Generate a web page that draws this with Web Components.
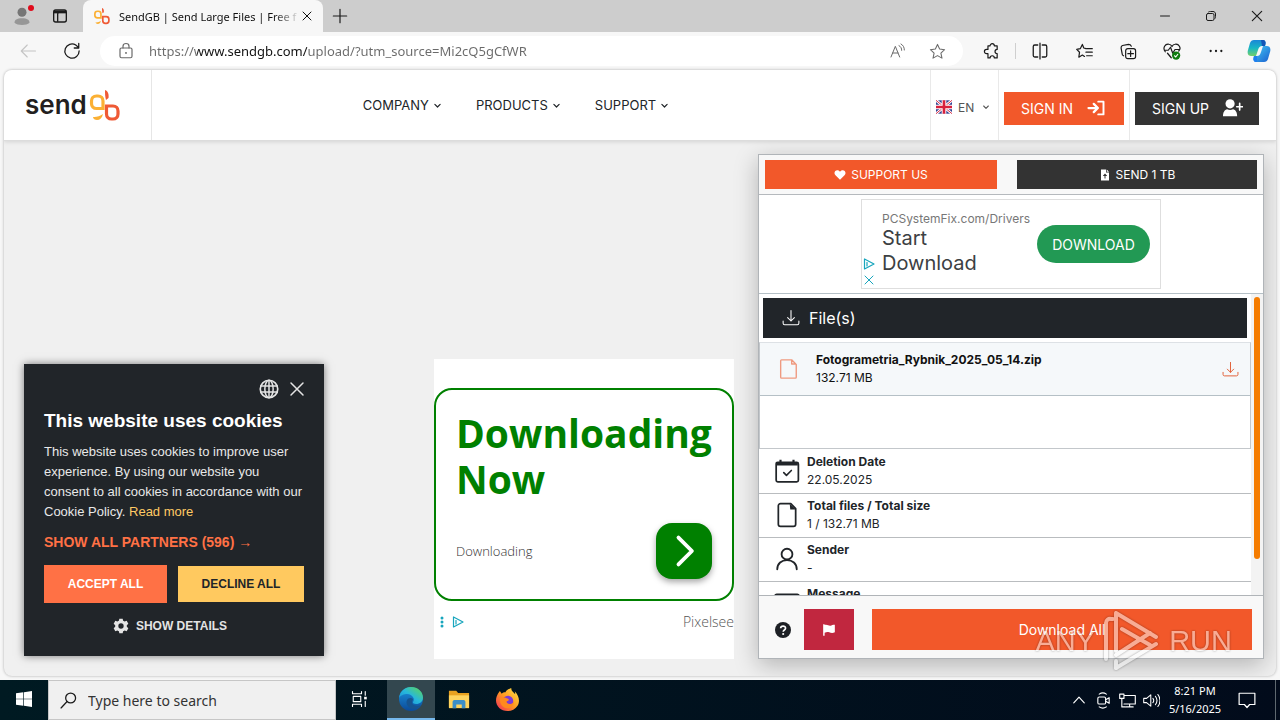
<!DOCTYPE html>
<html lang="en">
<head>
<meta charset="utf-8">
<title>SendGB | Send Large Files | Free file transfer</title>
<style>
  html, body { height: 100%; margin: 0; }
  body {
    font-family: Inter, "Liberation Sans", sans-serif;
    font-size: 12px;
    color: #212529;
    overflow: hidden;
  }
</style>
</head>
<body>
<desktop-screen>
  <browser-tabs slot="browser" text="SendGB | Send Large Files | Free f"></browser-tabs>
  <browser-toolbar slot="browser" url="https://www.sendgb.com/upload/?utm_source=Mi2cQ5gCfWR"></browser-toolbar>
  <site-header slot="page"></site-header>
  <site-main slot="page">
    <cookie-banner></cookie-banner>
    <square-ad></square-ad>
    <download-panel>
      <info-row icon="calendar" label="Deletion Date">22.05.2025</info-row>
      <info-row icon="file" label="Total files / Total size">1 / 132.71 MB</info-row>
      <info-row icon="person" label="Sender">-</info-row>
      <info-row icon="message" label="Message">-</info-row>
    </download-panel>
  </site-main>
  <windows-taskbar slot="taskbar"></windows-taskbar>
  <run-watermark slot="taskbar"></run-watermark>
</desktop-screen>

<script>
const line = (d, w = 1.5) => `<path d="${d}" fill="none" stroke="currentColor" stroke-width="${w}" stroke-linecap="round" stroke-linejoin="round"/>`;
const fill = (d) => `<path d="${d}" fill="currentColor"/>`;

// every icon is drawn on a 24 x 24 grid
const ICONS = {
  profile: '<circle cx="12" cy="7" r="6" fill="#767676"/><path d="M2 21c0-4 3-6 10-6s10 2 10 6c-2 2-6 3-10 3S4 23 2 21z" fill="#979797"/>',
  tabs: '<rect x="2.5" y="3" width="19" height="18" rx="3" fill="none" stroke="currentColor" stroke-width="2"/><path d="M3 4h18v4H3z" fill="currentColor"/>' + line('M8.5 8v12', 2),
  close: line('M4 4l16 16M20 4L4 20', 2),
  plus: line('M12 2v20M2 12h20', 1.8),
  minimize: line('M3 12h18', 2),
  restore: line('M6 7h9a3 3 0 0 1 3 3v8a3 3 0 0 1-3 3H6a3 3 0 0 1-3-3v-8a3 3 0 0 1 3-3zM7 4c1-1 2-1 4-1h5c3 0 5 2 5 5v5c0 2 0 3-1 4', 2),
  back: line('M22 12H3M11 4l-8 8 8 8', 1.5),
  refresh: line('M21.5 12A9.5 9.5 0 1 1 17 4l4 3.5M21 2v6h-6', 1.7),
  lock: '<rect x="4" y="8" width="16" height="13" rx="2" fill="none" stroke="currentColor" stroke-width="1.6"/>' + line('M8 8V5.5a4 3.5 0 0 1 8 0V8', 1.6) + '<circle cx="12" cy="14.5" r="1.3" fill="currentColor"/>',
  readAloud: line('M3 21L9.5 5 16 21M5.5 15h8M15 4c3 1.5 4 4 4 7M18 1.5c3.5 2 5 5 5 9', 1.5),
  star: line('M12 2l3 6.6 7 .8-5.2 4.8 1.5 7.2L12 17.8 5.7 21.4l1.5-7.2L2 9.4l7-.8z', 1.5),
  puzzle: line('M7 4h3a3 3 0 0 1 6 0h4v5a3 3 0 0 0 0 6v6h-4a3 3 0 0 0-6 0H7v-6H5a3 3 0 0 1 0-6h2z', 1.7),
  split: line('M9 4H5a2 2 0 0 0-2 2v12a2 2 0 0 0 2 2h4M15 4h4a2 2 0 0 1 2 2v12a2 2 0 0 1-2 2h-4M12 1.5v21', 1.7),
  favorites: line('M14 8l-3-1-2-5-3 6-5 1 4 4-1 7 5-3 3 2M15 8h8M14 13h9M15 18h8', 1.7),
  collections: '<rect x="8" y="8" width="14" height="14" rx="3" fill="none" stroke="currentColor" stroke-width="1.7"/>' + line('M15 11v8M11 15h8M5 18c-2-1-2-2-2-3L1.5 7c0-2 .5-3 2-3.5L12 2c2 0 3 .5 4 2.5', 1.7),
  health: line('M3 13C-1 8 3 2 8 3c2 0 3 1 4 3 1-2 2-3 4-3 5-1 9 5 5 9M2 11h5l3-4 3 8 3-5h6M6 15l5 6', 1.6) + '<circle cx="17.5" cy="18" r="5.5" fill="#107c10"/><path d="M15 18l2 2 3-4" stroke="#fff" stroke-width="1.5" fill="none"/>',
  dots: '<circle cx="4" cy="12" r="1.7" fill="currentColor"/><circle cx="12" cy="12" r="1.7" fill="currentColor"/><circle cx="20" cy="12" r="1.7" fill="currentColor"/>',
  copilot: `<defs><linearGradient id="a" x1="0" y1="0" x2="0" y2="1"><stop offset="0" stop-color="#1b86d8"/><stop offset=".5" stop-color="#18b6c4"/><stop offset="1" stop-color="#74d06a"/></linearGradient>
    <linearGradient id="b" x1="0" y1="0" x2="1" y2="1"><stop offset="0" stop-color="#45cdf5"/><stop offset="1" stop-color="#1a5fd0"/></linearGradient></defs>
    <path d="M7 1h9c2 0 3 2 2.500 4L18 7h-3c-2 0-3 1-4 4l-2 6H4c-3 0-4-3-3-6l2-7c.7-2 2-3 4-3z" fill="url(#a)"/>
    <path d="M17 23H9c-2 0-3-2-2.500-4L7 17h3c2 0 3-1 4-4l2-6h4c3 0 4 3 3 6l-2 7c-.7 2-2 3-4 3z" fill="url(#b)"/>
    <path d="M14 1h2c2 0 3 2 2.500 4L18 7h-3z" fill="#1456b8"/><path d="M10 23H9c-2 0-3-2-2.500-4L7 17h3z" fill="#1f7ff0"/>`,
  chevron: line('M5 9l7 7 7-7', 3.2),
  flag: '<rect width="24" height="20" y="2" fill="#2f3f8f"/><path d="M0 2l24 20M24 2L0 22" stroke="#fff" stroke-width="4"/><path d="M0 2l24 20M24 2L0 22" stroke="#d8304a" stroke-width="1.5"/><path d="M12 2v20M0 12h24" stroke="#fff" stroke-width="7"/><path d="M12 2v20M0 12h24" stroke="#d8203c" stroke-width="4"/>',
  signIn: line('M2 12h12M9 6.5l5.5 5.5L9 17.5', 3) + line('M15 3.5h7v17h-7', 2.6),
  signUp: '<circle cx="8.5" cy="7" r="5.5" fill="currentColor"/>' + fill('M0 22c0-5 2-8 5-8.5 2 1.2 5 1.2 7 0 3 .5 5 3.5 5 8.5z') + line('M20 6.5v8M16.5 10.5h7', 2),
  heart: fill('M12 21.5l-9.500-9.7C-1 7.500 2 2.500 6.500 2.500c2.500 0 4.500 1.300 5.500 3 1-1.700 3-3 5.500-3 4.500 0 7.500 5 4 9.300z'),
  fileUp: '<path d="M4 1h10v6h6v16H4zM15.5 1L20 5.5h-4.5zM12 9l-4.500 5H11v5h2v-5h3.500z" fill="currentColor" fill-rule="evenodd"/>',
  tray: line('M12 2v14M7.5 11.5L12 16l4.5-4.5M1.5 16v3a2 2 0 0 0 2 2h17a2 2 0 0 0 2-2v-3', 1.4),
  page: line('M16 2H5a1 1 0 0 0-1 1v18a1 1 0 0 0 1 1h15a1 1 0 0 0 1-1V7zM16 2v4.5h4.5', 1.5),
  calendar: '<rect x="2" y="4" width="20.5" height="18" rx="1.5" fill="none" stroke="currentColor" stroke-width="1.6"/>' + fill('M2 4h20v3H2zM5 1.5h2V5H5zM17 1.5h2V5h-2z') + line('M9 13.5l2.5 2.5 4.5-4.5', 1.5),
  file: line('M15.5 1.5H6a2 2 0 0 0-2 2v17a2 2 0 0 0 2 2h12a2 2 0 0 0 2-2V6z', 1.6) + fill('M14.5 1.5L20.5 7H15z'),
  person: '<circle cx="12" cy="7.5" r="5" fill="none" stroke="currentColor" stroke-width="1.7"/>' + line('M3 21.5c0-5.500 4-8.500 9-8.500s9 3 9 8.500', 1.7),
  message: '<rect x="1" y="4" width="22" height="17" rx="1.5" fill="none" stroke="currentColor" stroke-width="1.7"/>',
  help: '<circle cx="12" cy="12" r="12" fill="currentColor"/><path d="M8.5 9.5C8.5 5 16 5 15.800 9.500c0 2.500-3.500 2.500-3.500 5" stroke="#fff" stroke-width="2.5" fill="none"/><circle cx="12.3" cy="18" r="1.6" fill="#fff"/>',
  report: fill('M2 2h2.500v1.500c4-1.500 7 1.500 10 1 2-.3 4-1.500 7.500-1.500v13c-4 2-7 1-9.500 0-3-1-5-.5-8 .5V22H2z'),
  globe: '<circle cx="12" cy="12" r="10.5" fill="none" stroke="currentColor" stroke-width="2"/><ellipse cx="12" cy="12" rx="5" ry="10.5" fill="none" stroke="currentColor" stroke-width="1.8"/>' + line('M12 2v20M2 8.5h20M2 15.5h20', 1.8),
  gear: '<path fill-rule="evenodd" fill="currentColor" d="M9.5 1h5l.7 3 2.300 1.300 3-1 2.500 4.300-2.300 2.200v2.400l2.300 2.200-2.500 4.300-3-1-2.300 1.300-.7 3h-5l-.7-3-2.300-1.300-3 1L1 15.400l2.300-2.200v-2.400L1 8.600l2.500-4.300 3 1L8.800 4zM12 8a4 4 0 1 0 0 8 4 4 0 0 0 0-8z"/>',
  adChoices: line('M3 2v20l19-10z', 2.4) + line('M8 9v7', 2.4),
  moreVertical: '<circle cx="12" cy="4" r="3" fill="currentColor"/><circle cx="12" cy="12" r="3" fill="currentColor"/><circle cx="12" cy="20" r="3" fill="currentColor"/>',
  next: line('M8.500 3.500L17 12l-8.500 8.500', 2.4),
  windows: fill('M0 3.500L11 2v9.500H0zM12 1.800L24 0v11.500H12zM0 12.500h11V22L0 20.500zM12 12.500h12V24l-12-1.800z'),
  search: '<circle cx="15" cy="8.5" r="7" fill="none" stroke="currentColor" stroke-width="1.8"/>' + line('M10 13.500L1.500 22.500', 1.8),
  taskView: line('M2 2v3h12V2M2 22v-3h12v3M3 8.500h10v7H3zM19 2v5M19 15v7', 1.5) + fill('M17.500 9h3.500v3.500h-3.500z'),
  edge: `<defs><linearGradient id="a" x1="0" y1="1" x2="1" y2="0"><stop offset="0" stop-color="#1787d4"/><stop offset=".5" stop-color="#27b8dc"/><stop offset="1" stop-color="#62d84c"/></linearGradient>
    <linearGradient id="b" x1="0" y1="0" x2="0" y2="1"><stop offset="0" stop-color="#1c95df"/><stop offset="1" stop-color="#0c4a98"/></linearGradient></defs>
    <circle cx="12" cy="12" r="12" fill="url(#b)"/><path d="M0 11C1 4 6 0 12 0c7 0 12 5 12 10.500 0 4-3 6.500-7 6.500-2 0-3.500-1-3-2 1-1.500 1-3 .5-4C13 8 10 6.500 7 7c-3.500.5-6 2-7 4z" fill="url(#a)"/>
    <path d="M14 12c-2-2-5-1-6 1-2 4 2 9 7 9 3 0 5-1.500 7-4-3 2-8 1-9-2-.5-1.500 1-2.500 1-4z" fill="#16538f"/>`,
  explorer: '<path d="M1 3h8l2 2.500h12V21H1z" fill="#e9a220"/><path d="M1 8h22v14H1z" fill="#ffd45e"/><path d="M5 22v-7c0-1 1-2 2-2h10c1 0 2 1 2 2v7h-4v-4H9v4z" fill="#3c8fc8"/>',
  firefox: `<defs><linearGradient id="a" x1="1" y1="0" x2="0" y2="1"><stop offset="0" stop-color="#ffe64a"/><stop offset=".5" stop-color="#ff9a20"/><stop offset="1" stop-color="#f0255e"/></linearGradient></defs>
    <path d="M2 6l2-3 2 3c1-1 2-1.500 4-1.500C10 3 13 1 16 0c-.5 3 2 4 4 6.500 0-1 0-2-.5-3 5 5 5.500 11 3 15C20 22.500 16 24 12 24 5 24 0 19 0 13c0-3 1-5 2-7z" fill="url(#a)"/><circle cx="12.5" cy="13.5" r="5.5" fill="#7b3bd6"/><path d="M4 11c3-2 6-1 8 0 2 .5 2 2-1 3 0 3 5 4 8 0-1 5-4 7-7 7-5 0-8-4-8-10z" fill="#ff8a1e"/>`,
  up: line('M3 17l9-10 9 10', 2),
  meetNow: '<rect x="4" y="7" width="11" height="10" rx="2" fill="none" stroke="currentColor" stroke-width="1.6"/>' + line('M15 11l5-3v8l-5-3M6 3c3-2 7-2 10 0M6 21c3 2 7 2 10 0', 1.6),
  network: line('M7 5h16v12H7M15 17v4M10 21h10M1 3h6v6H1zM4 9v12h5', 1.6),
  volume: line('M1 9v6h4l6 5V4L5 9zM14 9c1.500 2 1.500 4 0 6M17.500 6c3 4 3 8 0 12M21 3.500c4 5 4 12 0 17', 1.5),
  notice: line('M1.500 3h21v15h-7L12 22l-3.500-4h-7z', 1.6)
};

class UiIcon extends HTMLElement {
    constructor() {
        super();
        let el = this;
        const size = el.getAttribute('size') || 16;
        el.attachShadow({ mode: 'open' }).innerHTML = `
      <style>
        :host { display: inline-flex; flex: none; }
        svg { display: block; }
      </style>
      <svg width="${size}" height="${size}" viewBox="0 0 24 24" aria-hidden="true">${ICONS[el.getAttribute('name')]}</svg>
    `;
    }
}

class GbMark extends HTMLElement {
    constructor() {
        super();
        let el = this;
        const size = el.getAttribute('size') || 34;
        el.attachShadow({ mode: 'open' }).innerHTML = `
      <style>
        :host { display: inline-flex; flex: none; }
      </style>
      <svg width="${size}" height="${size}" viewBox="0 0 34 34" aria-hidden="true">
        <path d="M15 20.500H8.500c-3 0-5-2-5-5V13c0-3 2-5 5-5h1.500c3 0 5 2 5 5z" fill="none" stroke="#fbb034" stroke-width="3.2"/>
        <path d="M5 29c3 .5 7-1 10-3-1 4-3 6-6 6-2 0-4-1-4-3z" fill="#fbb034"/>
        <path d="M18.500 18H25c3 0 5 2 5 5v3c0 3-2 5-5 5h-1.500c-3 0-5-2-5-5z" fill="none" stroke="#ef5a35" stroke-width="3.2"/>
        <path d="M17 2c3 1 4 4 3.500 8L18 12c-1-3-1-7-1-10z" fill="#ef5a35"/>
      </svg>
    `;
    }
}

// buttons share one reset inside each shadow root
const RESET = `
  * { box-sizing: border-box; }
  button, input, select { font: inherit; color: inherit; margin: 0; padding: 0; border: 0; border-radius: 0; background: none; outline: none; }
  button { display: inline-flex; align-items: center; justify-content: center; cursor: pointer; }
  a { text-decoration: none; color: inherit; }
`;

class DesktopScreen extends HTMLElement {
    constructor() {
        super();
        this.attachShadow({ mode: 'open' }).innerHTML = `
      <style>
        :host { display: flex; flex-direction: column; height: 100vh; background: #f7f7f7; position: relative; }
        .page {
          flex: 1; min-height: 0; display: flex; flex-direction: column;
          margin: 0 4px 4px; border-radius: 8px; overflow: hidden;
          background: #f0f0f0; box-shadow: 0 0 3px rgba(0, 0, 0, .3);
        }
      </style>
      <slot name="browser"></slot>
      <div class="page"><slot name="page"></slot></div>
      <slot name="taskbar"></slot>
    `;
    }
}

class BrowserTabs extends HTMLElement {
    constructor() {
        super();
        let el = this;
        el.attachShadow({ mode: 'open' }).innerHTML = `
      <style>
        ${RESET}
        :host { display: flex; height: 32px; background: #cdcdcd; color: #1b1b1b; font: 11px "Noto Sans", sans-serif; }
        .profile { width: 44px; position: relative; }
        .dot { position: absolute; top: 5px; right: 10px; width: 6px; height: 6px; border-radius: 50%; background: #e00b1c; }
        .workspaces { width: 32px; }
        .tab { display: flex; align-items: center; width: 240px; margin-left: 7px; padding: 0 10px; background: #f7f7f7; border-radius: 8px 8px 0 0; color: #111; }
        .title {
          flex: 1; margin-left: 8px; white-space: nowrap;
          -webkit-mask-image: linear-gradient(to right, #000 85%, transparent);
        }
        .close { width: 12px; height: 16px; }
        .new { width: 34px; }
        .window { margin-left: auto; display: flex; }
        .window button { width: 46px; }
      </style>
      <button class="profile" aria-label="Profile"><ui-icon name="profile" size="18"></ui-icon><span class="dot"></span></button>
      <button class="workspaces" aria-label="Tab actions"><ui-icon name="tabs" size="16"></ui-icon></button>
      <div class="tab">
        <gb-mark size="18"></gb-mark>
        <span class="title">${el.getAttribute('text')}</span>
        <button class="close" aria-label="Close tab"><ui-icon name="close" size="12"></ui-icon></button>
      </div>
      <button class="new" aria-label="New tab"><ui-icon name="plus" size="16"></ui-icon></button>
      <div class="window">
        <button aria-label="Minimize"><ui-icon name="minimize" size="12"></ui-icon></button>
        <button aria-label="Restore"><ui-icon name="restore" size="12"></ui-icon></button>
        <button aria-label="Close"><ui-icon name="close" size="14"></ui-icon></button>
      </div>
    `;
    }
}

class BrowserToolbar extends HTMLElement {
    constructor() {
        super();
        let el = this;
        el.attachShadow({ mode: 'open' }).innerHTML = `
      <style>
        ${RESET}
        :host { display: flex; align-items: center; height: 38px; background: #f7f7f7; color: #1b1b1b; font: 13px "Noto Sans", sans-serif; }
        .nav { width: 44px; height: 32px; }
        .back { margin-left: 6px; color: #c4c4c4; }
        .address { flex: 1; min-width: 0; display: flex; align-items: center; height: 30px; margin: 0 6px; padding: 0 6px 0 17px; border-radius: 15px; background: #fff; color: #6a6a6a; }
        .address button { width: 40px; height: 28px; }
        /* the host name is darker than the rest of the address */
        input {
          flex: 1; min-width: 0; height: 28px; margin-left: 14px;
          color: #6a6a6a;
          background: linear-gradient(to right, #6a6a6a 48px, #111 48px, #111 158px, #6a6a6a 158px);
          -webkit-background-clip: text; background-clip: text;
          -webkit-text-fill-color: transparent;
        }
        .rule { width: 1px; height: 16px; margin: 0 2px; background: #cfcfcf; }
        .copilot { width: 42px; }
      </style>
      <button class="nav back" aria-label="Back"><ui-icon name="back" size="18"></ui-icon></button>
      <button class="nav" aria-label="Refresh"><ui-icon name="refresh" size="18"></ui-icon></button>
      <div class="address">
        <ui-icon name="lock" size="18"></ui-icon>
        <input type="text" aria-label="Address" value="${el.getAttribute('url')}">
        <button aria-label="Read aloud"><ui-icon name="readAloud" size="16"></ui-icon></button>
        <button aria-label="Add to favorites"><ui-icon name="star" size="17"></ui-icon></button>
      </div>
      <button class="nav" aria-label="Extensions"><ui-icon name="puzzle" size="17"></ui-icon></button>
      <span class="rule"></span>
      <button class="nav" aria-label="Split screen"><ui-icon name="split" size="18"></ui-icon></button>
      <button class="nav" aria-label="Favorites"><ui-icon name="favorites" size="17"></ui-icon></button>
      <button class="nav" aria-label="Collections"><ui-icon name="collections" size="17"></ui-icon></button>
      <button class="nav" aria-label="Browser essentials"><ui-icon name="health" size="18"></ui-icon></button>
      <button class="nav" aria-label="Settings"><ui-icon name="dots" size="16"></ui-icon></button>
      <button class="copilot" aria-label="Copilot"><ui-icon name="copilot" size="24"></ui-icon></button>
    `;
    }
}

class SiteHeader extends HTMLElement {
    constructor() {
        super();
        this.attachShadow({ mode: 'open' }).innerHTML = `
      <style>
        ${RESET}
        :host { display: flex; flex: none; height: 70px; background: #fff; border-bottom: 1px solid #dcdcdc; box-shadow: 0 1px 4px rgba(0, 0, 0, .12); z-index: 1; }
        .logo { display: flex; align-items: center; width: 148px; padding-left: 21px; border-right: 1px solid #e6e6e6; font-size: 26px; font-weight: 600; color: #231f20; line-height: 32px; }
        .logo gb-mark { margin-left: 1px; }
        nav { flex: 1; display: flex; align-items: center; justify-content: center; gap: 34px; padding-right: 50px; font-size: 13px; }
        nav button { gap: 4px; }
        .cell { display: flex; align-items: center; padding: 6px 5px 0; border-left: 1px solid #e9e9e9; }
        .cell:last-child { padding-right: 17px; }
        .lang { width: 68px; gap: 6px; padding-top: 4px; color: #555; }
        select { appearance: none; width: 18px; }
        .sign { height: 33px; padding: 0 19px 0 17px; gap: 14px; font-size: 14px; color: #fff; background: #f2582a; }
        .up { background: #333; padding-right: 16px; }
      </style>
      <a class="logo" href="#">send<gb-mark size="34"></gb-mark></a>
      <nav>
        <button>COMPANY<ui-icon name="chevron" size="9"></ui-icon></button>
        <button>PRODUCTS<ui-icon name="chevron" size="9"></ui-icon></button>
        <button>SUPPORT<ui-icon name="chevron" size="9"></ui-icon></button>
      </nav>
      <div class="cell lang">
        <ui-icon name="flag" size="16"></ui-icon>
        <select aria-label="Language"><option>EN</option></select>
        <ui-icon name="chevron" size="8"></ui-icon>
      </div>
      <div class="cell"><button class="sign">SIGN IN<ui-icon name="signIn" size="18"></ui-icon></button></div>
      <div class="cell"><button class="sign up">SIGN UP<ui-icon name="signUp" size="20"></ui-icon></button></div>
    `;
    }
}

class SiteMain extends HTMLElement {
    constructor() {
        super();
        this.attachShadow({ mode: 'open' }).innerHTML = `
      <style>
        :host { flex: 1; min-height: 0; display: flex; align-items: flex-end; justify-content: space-between; gap: 24px; padding: 13px 12px 17px 20px; }
        ::slotted(square-ad) { margin-left: auto; }
      </style>
      <slot></slot>
    `;
    }
}

class CookieBanner extends HTMLElement {
    constructor() {
        super();
        this.attachShadow({ mode: 'open' }).innerHTML = `
      <style>
        ${RESET}
        :host {
          display: block; flex: 0 0 300px; box-sizing: border-box; margin-bottom: 3px; padding: 13px 20px 20px;
          background: #212529; color: #fff; box-shadow: 0 0 8px rgba(0, 0, 0, .5);
          font: 13px/20px "Liberation Sans", Arial, sans-serif;
        }
        .tools { display: flex; justify-content: flex-end; gap: 2px; height: 24px; margin-right: -6px; color: #e4e4e4; }
        .tools button { width: 26px; }
        h2 { margin: 8px 0 0; font-size: 19px; line-height: 24px; white-space: nowrap; }
        p { margin: 9px -2px 0 0; color: #e8e8e8; }
        p a { color: #ffca64; }
        .partners { display: block; margin-top: 10px; font-size: 14px; font-weight: bold; color: #ff7145; }
        .choices { display: flex; align-items: center; gap: 11px; margin-top: 13px; font-size: 12px; font-weight: bold; }
        .choices button { flex: 1; height: 36px; background: #ffc95f; color: #212529; }
        .choices .accept { flex: 0 0 123px; height: 38px; background: #ff7145; color: #fff; }
        .details { display: flex; gap: 7px; margin: 13px auto 0; padding-right: 8px; font-size: 12px; line-height: 20px; font-weight: bold; color: #e4e4e4; }
      </style>
      <div class="tools">
        <button aria-label="Language"><ui-icon name="globe" size="20"></ui-icon></button>
        <button aria-label="Close"><ui-icon name="close" size="18"></ui-icon></button>
      </div>
      <h2>This website uses cookies</h2>
      <p>This website uses cookies to improve user<br>experience. By using our website you<br>consent to all cookies in accordance with our<br>Cookie Policy. <a href="#">Read more</a></p>
      <a class="partners" href="#">SHOW ALL PARTNERS (596) →</a>
      <div class="choices"><button class="accept">ACCEPT ALL</button><button>DECLINE ALL</button></div>
      <button class="details"><ui-icon name="gear" size="16"></ui-icon>SHOW DETAILS</button>
    `;
    }
}

class SquareAd extends HTMLElement {
    constructor() {
        super();
        this.attachShadow({ mode: 'open' }).innerHTML = `
      <style>
        ${RESET}
        :host { display: flex; flex-direction: column; flex: 0 0 300px; min-width: 0; box-sizing: border-box; height: 300px; padding-top: 29px; background: #fff; font-family: "Open Sans", sans-serif; }
        .card { display: flex; flex-direction: column; justify-content: space-between; height: 213px; padding: 20px 19px 20px 20px; border: 2px solid green; border-radius: 18px; }
        h2 { margin: 0; font-size: 39px; line-height: 46px; font-weight: 700; color: green; }
        .row { display: flex; align-items: center; justify-content: space-between; font-size: 13px; font-weight: 300; color: #333; }
        .row button { width: 56px; height: 56px; margin-right: 1px; border-radius: 16px; background: green; color: #fff; box-shadow: 0 3px 6px rgba(0, 0, 0, .35); }
        .foot { display: flex; align-items: center; gap: 4px; padding: 11px 0 0 2px; font-size: 14px; line-height: 20px; font-weight: 300; color: #555; }
        .foot ui-icon { color: #17a5bd; }
        .foot a { margin-left: auto; }
      </style>
      <div class="card">
        <h2>Downloading Now</h2>
        <div class="row"><span>Downloading</span><button aria-label="Open"><ui-icon name="next" size="38"></ui-icon></button></div>
      </div>
      <div class="foot">
        <ui-icon name="moreVertical" size="12"></ui-icon>
        <ui-icon name="adChoices" size="12"></ui-icon>
        <a href="#">Pixelsee</a>
      </div>
    `;
    }
}

class BannerAd extends HTMLElement {
    constructor() {
        super();
        this.attachShadow({ mode: 'open' }).innerHTML = `
      <style>
        ${RESET}
        :host { display: flex; align-items: center; justify-content: space-between; box-sizing: border-box; width: 300px; height: 90px; padding: 0 10px 0 20px; border: 1px solid #dedede; position: relative; }
        .site { font-size: 12px; line-height: 14px; color: #777; }
        .name { font-size: 20px; line-height: 25px; color: #3c4043; }
        .get { width: 113px; height: 38px; border-radius: 19px; background: #229954; color: #fff; font-size: 14px; }
        .marks { position: absolute; left: 1px; bottom: 2px; display: flex; flex-direction: column; gap: 4px; color: #17a5bd; }
      </style>
      <div><div class="site">PCSystemFix.com/Drivers</div><div class="name">Start<br>Download</div></div>
      <button class="get">DOWNLOAD</button>
      <div class="marks"><ui-icon name="adChoices" size="12"></ui-icon><ui-icon name="close" size="12"></ui-icon></div>
    `;
    }
}

class InfoRow extends HTMLElement {
    constructor() {
        super();
        let el = this;
        el.attachShadow({ mode: 'open' }).innerHTML = `
      <style>
        :host { display: flex; align-items: center; flex: none; gap: 7px; box-sizing: border-box; min-height: 44px; padding: 3px 15px 4px; border-bottom: 1px solid #b9bcbf; line-height: 18px; color: #212529; }
      </style>
      <ui-icon name="${el.getAttribute('icon')}" size="26"></ui-icon>
      <div><b>${el.getAttribute('label')}</b><br><slot></slot></div>
    `;
    }
}

class DownloadPanel extends HTMLElement {
    constructor() {
        super();
        this.attachShadow({ mode: 'open' }).innerHTML = `
      <style>
        ${RESET}
        :host { display: flex; flex-direction: column; align-self: stretch; flex: 0 1 506px; min-width: 0; box-sizing: border-box; border: 1px solid #b0b4b8; background: #fff; box-shadow: 0 6px 22px rgba(0, 0, 0, .25); }
        .top { display: flex; gap: 20px; padding: 5px 6px; background: #f8f8f8; border-bottom: 1px solid #b5b9bd; font-size: 12px; color: #fff; }
        .top button { height: 29px; gap: 5px; flex: 1 1 240px; background: #333; }
        .top .support { flex-basis: 232px; background: #f2582a; }
        .ad { display: flex; justify-content: center; padding: 4px 0; border-bottom: 1px solid #b5c0c6; }
        .body { flex: 1; min-height: 0; display: flex; }
        .list { flex: 1; min-width: 0; display: flex; flex-direction: column; overflow: hidden; }
        h3 { display: flex; align-items: center; gap: 9px; flex: none; height: 40px; margin: 4px; padding: 0 19px; background: #212529; color: #fff; font-size: 16px; font-weight: 400; }
        .files { flex: none; height: 107px; margin-bottom: 1px; border: 1px solid #c3c7cb; border-top-color: #dde1e5; }
        .item { display: flex; align-items: center; gap: 17px; height: 53px; padding: 0 11px 0 17px; background: #f5f8fa; border-bottom: 1px solid #b5c0c6; line-height: 18px; color: #111; }
        .item ui-icon { color: #ef9a80; }
        .item button { margin-left: auto; }
        .item button ui-icon { color: #e2633c; }
        .scroll { flex: none; width: 12px; padding: 3px 3px 0; background: #f3f3f3; }
        .thumb { height: 88%; border-radius: 3px; background: #f57c00; }
        .foot { display: flex; align-items: center; flex: none; padding: 13px 11px 8px 16px; border-top: 1px solid #b0b4b8; background: #f8f8f8; font-size: 14px; color: #fff; }
        .foot button { height: 41px; }
        .foot .help { height: 20px; color: #1d2025; }
        .report { width: 50px; margin: 0 18px 0 13px; background: #c1273f; }
        .all { flex: 1; background: #f2582a; }
      </style>
      <div class="top">
        <button class="support"><ui-icon name="heart" size="12"></ui-icon>SUPPORT US</button>
        <button><ui-icon name="fileUp" size="12"></ui-icon>SEND 1 TB</button>
      </div>
      <div class="ad"><banner-ad></banner-ad></div>
      <div class="body">
        <div class="list">
          <h3><ui-icon name="tray" size="18"></ui-icon>File(s)</h3>
          <div class="files">
            <div class="item">
              <ui-icon name="page" size="22"></ui-icon>
              <div><b>Fotogrametria_Rybnik_2025_05_14.zip</b><br>132.71 MB</div>
              <button aria-label="Download file"><ui-icon name="tray" size="17"></ui-icon></button>
            </div>
          </div>
          <slot></slot>
        </div>
        <div class="scroll"><div class="thumb"></div></div>
      </div>
      <div class="foot">
        <button class="help" aria-label="Help"><ui-icon name="help" size="16"></ui-icon></button>
        <button class="report" aria-label="Report"><ui-icon name="report" size="14"></ui-icon></button>
        <button class="all">Download All</button>
      </div>
    `;
    }
}

class WindowsTaskbar extends HTMLElement {
    constructor() {
        super();
        this.attachShadow({ mode: 'open' }).innerHTML = `
      <style>
        ${RESET}
        :host { display: flex; flex: none; height: 40px; background: linear-gradient(to right, #001a22, #020b1b); color: #fff; font: 11px "Noto Sans", sans-serif; }
        .app { width: 48px; border-bottom: 2px solid transparent; }
        .app.active { margin-left: 3px; background: #33474f; border-bottom-color: #76b9ed; }
        .search { display: flex; align-items: center; gap: 11px; width: 288px; padding-left: 11px; border: 1px solid #c6c6c6; background: #f0f0f0; color: #1b1b1b; font-size: 14px; }
        input { flex: 1; min-width: 0; }
        input::placeholder { color: #333; opacity: 1; }
        .tray { display: flex; margin-left: auto; }
        .tray button { width: 24px; }
        .clock { display: flex; flex-direction: column; justify-content: center; width: 64px; text-align: center; line-height: 18px; }
        .tray .notice { width: 40px; }
        .show { width: 5px; margin-left: 8px; border-left: 1px solid #5f6870; }
      </style>
      <button class="app" aria-label="Start"><ui-icon name="windows" size="16"></ui-icon></button>
      <label class="search"><ui-icon name="search" size="17"></ui-icon><input type="search" aria-label="Search" placeholder="Type here to search"></label>
      <button class="app" aria-label="Task view"><ui-icon name="taskView" size="18"></ui-icon></button>
      <button class="app active" aria-label="Microsoft Edge"><ui-icon name="edge" size="24"></ui-icon></button>
      <button class="app" aria-label="File Explorer"><ui-icon name="explorer" size="22"></ui-icon></button>
      <button class="app" aria-label="Firefox"><ui-icon name="firefox" size="23"></ui-icon></button>
      <div class="tray">
        <button aria-label="Hidden icons"><ui-icon name="up" size="14"></ui-icon></button>
        <button aria-label="Meet now"><ui-icon name="meetNow" size="17"></ui-icon></button>
        <button aria-label="Network"><ui-icon name="network" size="17"></ui-icon></button>
        <button aria-label="Volume"><ui-icon name="volume" size="17"></ui-icon></button>
        <div class="clock"><span>8:21 PM</span><span>5/16/2025</span></div>
        <button class="notice" aria-label="Notifications"><ui-icon name="notice" size="18"></ui-icon></button>
        <span class="show"></span>
      </div>
    `;
    }
}

class RunWatermark extends HTMLElement {
    constructor() {
        super();
        this.attachShadow({ mode: 'open' }).innerHTML = `
      <style>
        :host {
          position: absolute; right: 48px; bottom: 46px; display: flex; align-items: center; gap: 7px; pointer-events: none;
          color: #fff; opacity: .5; font: 29px/66px "Liberation Sans", sans-serif;
          filter: drop-shadow(0 0 1px rgba(0, 0, 0, .7));
        }
        svg { display: block; }
      </style>
      <span>ANY</span>
      <svg width="60" height="64" viewBox="0 0 60 64" fill="none" stroke="currentColor" stroke-width="4" stroke-linejoin="round" stroke-linecap="round" aria-hidden="true">
        <path d="M11 10H9a4 4 0 0 0-5 4v36"/>
        <path d="M54 28L14 4v38"/>
        <path d="M20 20l28 16M14 46l34-22M14 59l40-24"/>
        <path d="M14 52v7"/>
      </svg>
      <span>RUN</span>
    `;
    }
}

window.customElements.define('ui-icon', UiIcon);
window.customElements.define('gb-mark', GbMark);
window.customElements.define('desktop-screen', DesktopScreen);
window.customElements.define('browser-tabs', BrowserTabs);
window.customElements.define('browser-toolbar', BrowserToolbar);
window.customElements.define('site-header', SiteHeader);
window.customElements.define('site-main', SiteMain);
window.customElements.define('cookie-banner', CookieBanner);
window.customElements.define('square-ad', SquareAd);
window.customElements.define('banner-ad', BannerAd);
window.customElements.define('info-row', InfoRow);
window.customElements.define('download-panel', DownloadPanel);
window.customElements.define('windows-taskbar', WindowsTaskbar);
window.customElements.define('run-watermark', RunWatermark);
</script>
</body>
</html>
